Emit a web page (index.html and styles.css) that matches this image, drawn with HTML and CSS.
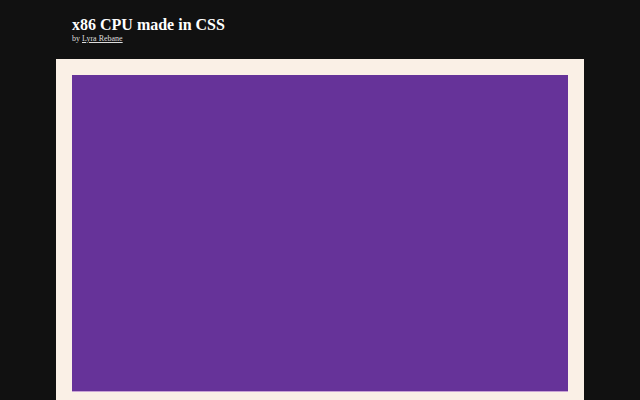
FILE: index.html
```html
<!DOCTYPE html>
<html>
<head>
<meta charset="utf-8">
<link rel="stylesheet" href="styles.css">
</head>
<body>
<header class="head">
  <h1 class="title">x86 CPU made in CSS</h1>
  <p class="byline">by <a href="#" class="author">Lyra Rebane</a></p>
</header>
<main class="panel">
  <div class="screen"></div>
</main>
</body>
</html>
```
FILE: styles.css
```css
html, body {
  margin: 0;
  padding: 0;
  background: #111111;
  font-family: "Liberation Serif", "Times New Roman", serif;
  color: #ffffff;
  overflow: hidden;
  height: 400px;
}
.head {
  padding: 16px 72px 0 72px;
  height: 43px;
  box-sizing: border-box;
}
.title {
  margin: 0;
  font-size: 16px;
  line-height: 18px;
  font-weight: bold;
}
.byline {
  margin: 0;
  font-size: 8px;
  line-height: 10px;
  color: #dddddd;
}
.author {
  color: #dddddd;
}
.panel {
  margin: 16px 56px 0 56px;
  padding: 16px 16px 0 16px;
  background: #faf0e6;
  height: 325px;
}
.screen {
  height: 316px;
  background: #663399;
  border-bottom: 1px solid #c9a3d6;
}
```
